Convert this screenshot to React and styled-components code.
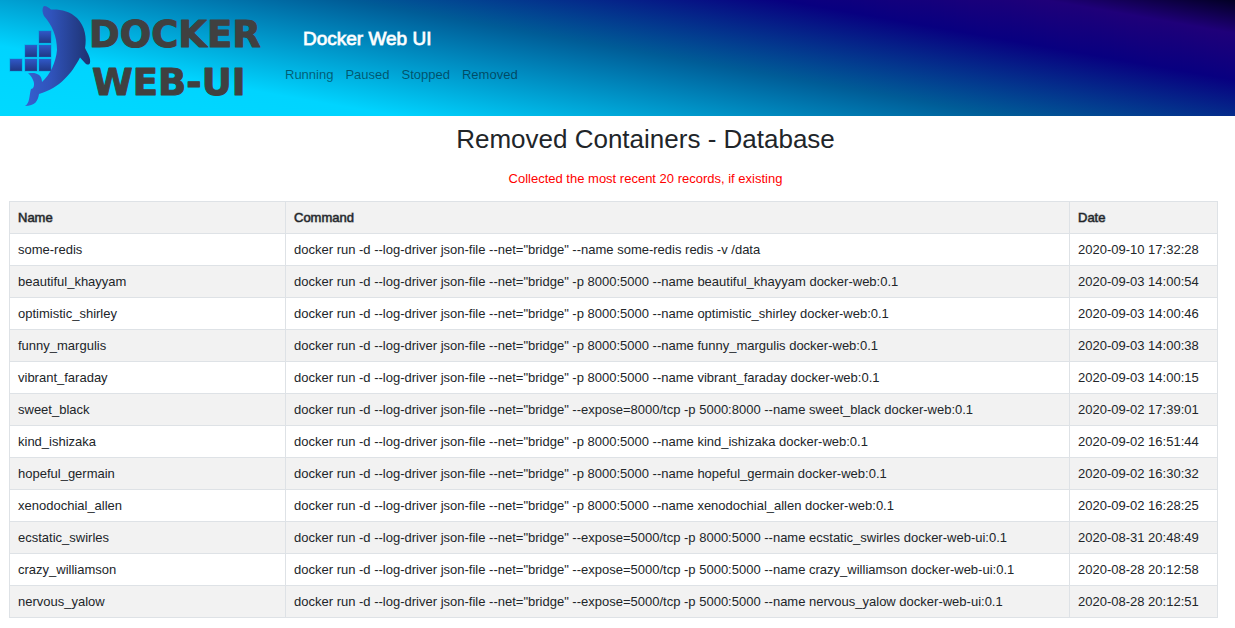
import React from "react";
import styled, { createGlobalStyle } from "styled-components";

const GlobalStyle = createGlobalStyle`
  *, *::before, *::after { box-sizing: border-box; }
  body {
    margin: 0;
    background: #fff;
    color: #212529;
    font: 13px/20px "Liberation Sans", Arial, sans-serif;
  }
`;

const Header = styled.header`
  display: flex;
  align-items: flex-start;
  background: linear-gradient(190deg, #020024 0%, #1f0079 10%, #080080 24%, #005c97 47%, #00d4ff 79%, #00d9ff 100%);
`;

const Logo = styled.svg`
  display: block;
  flex: none;
  width: 270px;
  height: 116px;
`;

const Brand = styled.div`
  padding: 24px 0 0 15px;
`;

const BrandTitle = styled.h1`
  margin: 0 0 11px 18px;
  color: #fff;
  font-size: 19px;
  line-height: 30px;
  font-weight: 400;
  -webkit-text-stroke: 1px #fffc;
`;

const Nav = styled.nav`
  display: flex;
  gap: 12px;
`;

const NavLink = styled.a`
  color: rgba(0, 0, 0, 0.5);
  text-decoration: none;
`;

const Main = styled.main`
  padding: 8px 17px 10px 9px;
`;

const Title = styled.h2`
  margin: 0 0 14px 64px;
  font-size: 26px;
  line-height: 31px;
  font-weight: 400;
  text-align: center;
`;

const Note = styled.p`
  margin: 0 0 12px 64px;
  color: #f00;
  text-align: center;
`;

const Table = styled.table`
  width: 100%;
  border-collapse: collapse;
  table-layout: fixed;
`;

const Column = styled.col`
  width: ${(p) => p.$width};
`;

const Row = styled.tr`
  height: 32px;
  background: ${(p) => (p.$shaded ? "#f2f2f2" : "#fff")};
`;

const HeadCell = styled.th`
  padding: 6px 8px 5px;
  border: 1px solid #dee2e6;
  text-align: left;
  font-weight: 400;
  -webkit-text-stroke: 1px #2125298c;
`;

const Cell = styled.td`
  padding: 6px 8px 5px;
  border: 1px solid #dee2e6;
`;

const links = ["Running", "Paused", "Stopped", "Removed"];
const run = 'docker run -d --log-driver json-file --net="bridge" ';
const rows = [
  ["some-redis", "--name some-redis redis -v /data", "2020-09-10 17:32:28"],
  ["beautiful_khayyam", "-p 8000:5000 --name beautiful_khayyam docker-web:0.1", "2020-09-03 14:00:54"],
  ["optimistic_shirley", "-p 8000:5000 --name optimistic_shirley docker-web:0.1", "2020-09-03 14:00:46"],
  ["funny_margulis", "-p 8000:5000 --name funny_margulis docker-web:0.1", "2020-09-03 14:00:38"],
  ["vibrant_faraday", "-p 8000:5000 --name vibrant_faraday docker-web:0.1", "2020-09-03 14:00:15"],
  ["sweet_black", "--expose=8000/tcp -p 5000:8000 --name sweet_black docker-web:0.1", "2020-09-02 17:39:01"],
  ["kind_ishizaka", "-p 8000:5000 --name kind_ishizaka docker-web:0.1", "2020-09-02 16:51:44"],
  ["hopeful_germain", "-p 8000:5000 --name hopeful_germain docker-web:0.1", "2020-09-02 16:30:32"],
  ["xenodochial_allen", "-p 8000:5000 --name xenodochial_allen docker-web:0.1", "2020-09-02 16:28:25"],
  ["ecstatic_swirles", "--expose=5000/tcp -p 8000:5000 --name ecstatic_swirles docker-web-ui:0.1", "2020-08-31 20:48:49"],
  ["crazy_williamson", "--expose=5000/tcp -p 5000:5000 --name crazy_williamson docker-web-ui:0.1", "2020-08-28 20:12:58"],
  ["nervous_yalow", "--expose=5000/tcp -p 5000:5000 --name nervous_yalow docker-web-ui:0.1", "2020-08-28 20:12:51"],
];

const LogoText = styled.text`
  font: 700 37px "DejaVu Sans", sans-serif;
  fill: #404040;
  stroke: #404040;
  stroke-width: 1px;
  stroke-linejoin: round;
`;

const boxes = [[39, 31], [25, 45], [39, 45], [10, 59], [25, 59], [39, 59]];

function DockerLogo() {
  return (
    <Logo viewBox="0 0 270 116" role="img" aria-label="Docker Web-UI">
      <defs>
        <linearGradient id="dolphin" x1="0" x2="1" y1="0" y2="0">
          <stop offset="0" stopColor="#3560d0" />
          <stop offset="0.4" stopColor="#3053bb" />
          <stop offset="1" stopColor="#1e3270" />
        </linearGradient>
        <linearGradient id="crate" x1="0" x2="0" y1="0" y2="1">
          <stop offset="0" stopColor="#3058c8" />
          <stop offset="1" stopColor="#203884" />
        </linearGradient>
      </defs>
      {boxes.map(([x, y]) => (
        <rect key={`${x}-${y}`} x={x} y={y} width="12" height="12" fill="url(#crate)" stroke="#1078c8" strokeOpacity="0.45" />
      ))}
      <path
        fill="url(#dolphin)"
        d="M44 6 C47 6 49 8 51 9.5 C60 9 70 11 77 18 C85 26 87 38 85 48 C88 54 91 58 90 63 C89 65 87 65 85 63 L80 57.5 C72 73 60 88 39 94 C38 101 35 106 25 106 C30 103 29 96 31 89 C34 89 35 84 33 80 Q31 75 28 73.5 C35 72 42 74 42 82 C50 75 56 62 57 50 C57 36 52 25 44 16 C42 12 42 8 44 6 Z"
      />
      <LogoText x="89" y="47">DOCKER</LogoText>
      <LogoText x="92" y="95">WEB-UI</LogoText>
    </Logo>
  );
}

export default function App() {
  return (
    <>
      <GlobalStyle />
      <Header>
        <DockerLogo />
        <Brand>
          <BrandTitle>Docker Web UI</BrandTitle>
          <Nav>
            {links.map((label) => (
              <NavLink key={label} href={`#${label.toLowerCase()}`}>{label}</NavLink>
            ))}
          </Nav>
        </Brand>
      </Header>
      <Main>
        <Title>Removed Containers - Database</Title>
        <Note>Collected the most recent 20 records, if existing</Note>
        <Table>
          <colgroup>
            <Column $width="276px" />
            <Column />
            <Column $width="148px" />
          </colgroup>
          <thead>
            <Row $shaded>
              <HeadCell scope="col">Name</HeadCell>
              <HeadCell scope="col">Command</HeadCell>
              <HeadCell scope="col">Date</HeadCell>
            </Row>
          </thead>
          <tbody>
            {rows.map(([name, args, date], index) => (
              <Row key={name} $shaded={index % 2 === 1}>
                <Cell>{name}</Cell>
                <Cell>{run + args}</Cell>
                <Cell>{date}</Cell>
              </Row>
            ))}
          </tbody>
        </Table>
      </Main>
    </>
  );
}
